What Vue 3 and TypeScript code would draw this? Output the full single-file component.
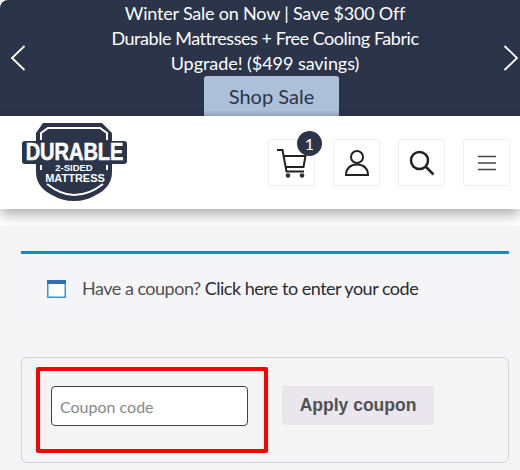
<template>
  <div class="page">
    <section class="promo">
      <button class="arrow" aria-label="Previous">
        <svg width="16" height="28" viewBox="0 0 16 28"><path d="M14.5 2 L2 14 L14.5 26" /></svg>
      </button>
      <div class="promo-body">
        <p v-for="line in promoLines" :key="line">{{ line }}</p>
        <a class="shop">Shop Sale</a>
      </div>
      <button class="arrow next" aria-label="Next">
        <svg width="16" height="28" viewBox="0 0 16 28"><path d="M1.5 2 L14 14 L1.5 26" /></svg>
      </button>
    </section>

    <header class="head">
      <svg class="logo" width="108" height="80" viewBox="0 0 108 80">
        <path class="navy" d="M22 1 H81 L91 11 V19 H103 Q106 19 106 22 V39 Q106 42 103 42 H91 V50 Q91 65 75 73 Q65 79 53 79 Q41 79 31 73 Q15 65 15 50 V42 H4 Q1 42 1 39 V22 Q1 19 4 19 H15 V11 Z" />
        <path class="line" d="M20 18 V11 L27 6 H79 L86 11 V18" />
        <path class="line" d="M26 62 Q40 73 53 73 Q68 73 82 62" />
        <path class="line" d="M20 43 V48 M86 43 V48" />
        <text class="t1" transform="translate(53.5 38) scale(1 1.180)">DURABLE</text>
        <text class="t2" x="53" y="49">2-SIDED</text>
        <text class="t3" x="54" y="60">MATTRESS</text>
      </svg>
      <nav class="tools">
        <a class="tool">
          <svg width="32" height="32" viewBox="0 0 32 32">
            <path class="stroke" d="M1 3 H6.500 L10.500 24.500 H28" />
            <path class="stroke" d="M7.500 9 H29.500 L27.500 20 H9.500" />
            <circle cx="12" cy="28.500" r="2.300" fill="#333" />
            <circle cx="26" cy="28.500" r="2.300" fill="#333" />
          </svg>
          <span class="badge">1</span>
        </a>
        <a class="tool">
          <svg width="26" height="28" viewBox="0 0 26 28">
            <circle class="stroke" cx="13" cy="8" r="6" />
            <path class="stroke" d="M2 26 H24 C24 19 19 15.500 13 15.500 C7 15.500 2 19 2 26 Z" />
          </svg>
        </a>
        <a class="tool">
          <svg width="26" height="26" viewBox="0 0 26 26">
            <circle class="stroke thick" cx="10.500" cy="10.500" r="8.500" />
            <path class="stroke thick" d="M17 17 L24.500 24.500" />
          </svg>
        </a>
        <a class="tool">
          <svg width="20" height="16" viewBox="0 0 20 16">
            <path class="stroke bars" d="M1 1.500 H19 M1 8 H19 M1 14.500 H19" />
          </svg>
        </a>
      </nav>
    </header>

    <main class="content">
      <div class="notice">
        <svg width="19" height="18" viewBox="0 0 19 18">
          <rect x="0.750" y="0.750" width="17.500" height="16.500" fill="#fff" stroke="#3a96d6" stroke-width="1.500" />
          <rect x="0" y="0" width="19" height="4" fill="#2f6fb0" />
        </svg>
        <span class="notice-text">Have a coupon? <a>Click here to enter your code</a></span>
      </div>

      <form class="coupon" @submit.prevent>
        <div class="field">
          <input type="text" placeholder="Coupon code" />
          <span class="marker"></span>
        </div>
        <button class="apply" type="submit">Apply coupon</button>
      </form>
    </main>
  </div>
</template>

<script setup lang="ts">
const promoLines: string[] = [
  'Winter Sale on Now | Save $300 Off',
  'Durable Mattresses + Free Cooling Fabric',
  'Upgrade! ($499 savings)',
]
</script>

<style>
html, body {
  margin: 0;
  background: #fff;
}
</style>

<style scoped>
.page {
  width: 520px;
  height: 470px;
  overflow: hidden;
  font-family: "Lato", "Liberation Sans", sans-serif;
  background: #fff;
}

.promo {
  height: 116px;
  display: flex;
  justify-content: space-between;
  background: #2b3449;
  border-top-left-radius: 8px;
}

.arrow {
  width: 44px;
  padding: 44px 0 0 10px;
  border: 0;
  background: none;
  display: flex;
  align-items: flex-start;
}
.arrow.next {
  width: 34px;
  padding-left: 17px;
}
.arrow svg path {
  fill: none;
  stroke: #fff;
  stroke-width: 1.800;
}

.promo-body {
  flex: 1;
  display: flex;
  flex-direction: column;
  align-items: center;
  color: #fff;
  font-size: 18px;
  line-height: 25px;
  padding-top: 1px;
}
.promo-body p {
  margin: 0;
  white-space: nowrap;
  letter-spacing: -0.2px;
}
.promo-body p:nth-child(2) {
  letter-spacing: -0.45px;
}
.promo-body p:nth-child(3) {
  letter-spacing: -0.05px;
}

.shop {
  box-sizing: border-box;
  width: 135px;
  height: 40px;
  margin-left: 13px;
  border-radius: 3px 3px 0 0;
  background: linear-gradient(#adc0da 85%, #98a9c4);
  color: #2b3449;
  font-size: 20px;
  line-height: 40px;
  text-align: center;
}

.head {
  height: 93px;
  display: flex;
  align-items: center;
  justify-content: space-between;
  padding: 0 10px 0 21px;
  background: #fff;
  box-shadow: 0 6px 12px rgba(0, 0, 0, 0.3);
  position: relative;
}
.logo {
  margin-top: -1px;
}
.navy {
  fill: #2b3449;
}
.line {
  fill: none;
  stroke: #fff;
  stroke-width: 2;
}
.t1 {
  font-family: "Liberation Sans", sans-serif;
  font-weight: 700;
  font-size: 20px;
  fill: #fff;
  text-anchor: middle;
  stroke: #fff;
  stroke-width: 0.5;
}
.t2,
.t3 {
  font-family: "Liberation Sans", sans-serif;
  font-weight: 700;
  font-size: 9.500px;
  fill: #fff;
  text-anchor: middle;
}
.t3 {
  font-size: 11px;
}

.tools {
  display: flex;
  gap: 18px;
}
.tool {
  position: relative;
  box-sizing: border-box;
  width: 47px;
  height: 47px;
  display: flex;
  align-items: center;
  justify-content: center;
  border: 1px solid #efefef;
  border-radius: 2px;
}
.stroke {
  fill: none;
  stroke: #222;
  stroke-width: 2;
}
.thick {
  stroke-width: 2.500;
}
.bars {
  stroke: #444;
  stroke-width: 1.600;
}
.badge {
  position: absolute;
  top: -9px;
  right: -8px;
  width: 25px;
  height: 25px;
  border-radius: 50%;
  background: #2b3449;
  color: #fff;
  font-size: 16px;
  line-height: 25px;
  text-align: center;
}

.content {
  margin-top: 17px;
  height: 244px;
  padding: 25px 11px 0 21px;
  background: #f4f4f5;
}

.notice {
  height: 69px;
  display: flex;
  align-items: center;
  gap: 16px;
  padding-left: 26px;
  border-top: 3px solid #2185bf;
  background: #f5f5f8;
}
.notice-text {
  font-size: 18px;
  letter-spacing: -0.5px;
  color: #515151;
  margin-top: -2px;
}
.notice-text a {
  color: #2b2b33;
}

.coupon {
  box-sizing: border-box;
  height: 106px;
  margin-top: 34px;
  display: flex;
  align-items: flex-start;
  gap: 34px;
  padding: 28px 0 0 29px;
  border: 1px solid #d0d0e0;
  border-radius: 6px;
}

.field {
  position: relative;
}
input {
  display: block;
  box-sizing: border-box;
  width: 197px;
  height: 40px;
  padding: 0 8px;
  border: 1px solid #4a3f3f;
  border-radius: 4px;
  background: #fff;
  font-family: inherit;
  font-size: 16px;
}
input::placeholder {
  color: #888;
}
.marker {
  position: absolute;
  left: -15px;
  top: -19px;
  width: 232px;
  height: 86px;
  box-sizing: border-box;
  border: 4px solid #f00;
  border-radius: 2px;
}

.apply {
  width: 152px;
  height: 39px;
  border: 0;
  border-radius: 3px;
  background: #e9e6ed;
  color: #515151;
  font-family: "Liberation Sans", sans-serif;
  font-weight: 700;
  font-size: 17.500px;
}
</style>
